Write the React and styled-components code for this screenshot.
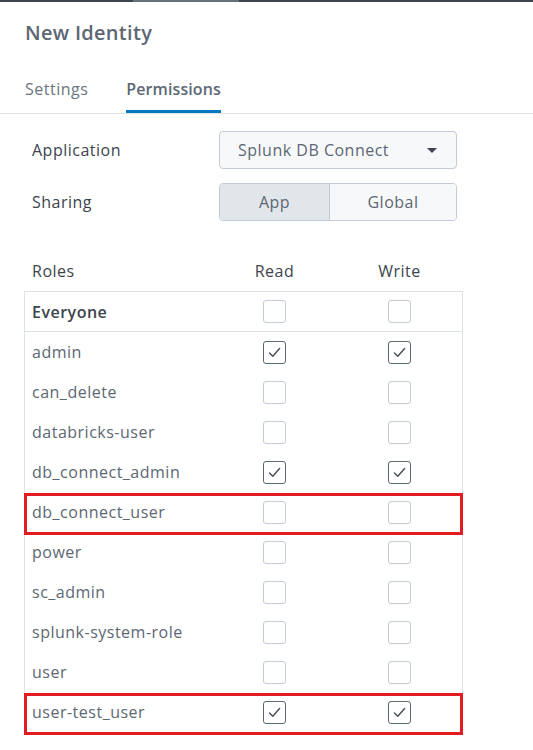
import React from "react";
import styled, { createGlobalStyle } from "styled-components";

const Global = createGlobalStyle`
  html, body { margin: 0; padding: 0; background: #fff; }
  body { font-family: "Open Sans", Lato, "Liberation Sans", sans-serif; color: #5c6773; letter-spacing: 0.5px; }
  * { box-sizing: border-box; }
`;

const Page = styled.div`
  width: 533px;
  min-height: 750px;
  background: #fff;
  display: flex;
  flex-direction: column;
`;

const TopBar = styled.div`
  height: 2px;
  display: grid;
  grid-template-columns: 133px 106px 1fr;
`;

const BarSeg = styled.div`
  background: ${(p) => (p.$light ? "#627479" : "#3c444d")};
`;

const Title = styled.h1`
  margin: 0;
  padding: 19px 25px 0;
  font-size: 20px;
  line-height: 24px;
  font-weight: 600;
  letter-spacing: 0.3px;
  color: #5c6773;
`;

const Tabs = styled.div`
  display: flex;
  gap: 38px;
  padding: 0 25px;
  border-bottom: 1px solid #dde2e7;
`;

const Tab = styled.div`
  padding: 34px 0 11px;
  font-size: 16px;
  line-height: 20px;
  letter-spacing: ${(p) => (p.$active ? "0.1px" : "0.5px")};
  font-weight: ${(p) => (p.$active ? 600 : 400)};
  color: ${(p) => (p.$active ? "#5c6773" : "#6b7580")};
  border-bottom: 3px solid ${(p) => (p.$active ? "#0877c2" : "transparent")};
`;

const Form = styled.div`
  padding: 17px 0 0 32px;
  display: flex;
  flex-direction: column;
  gap: 14px;
`;

const FormRow = styled.div`
  display: grid;
  grid-template-columns: 187px 238px;
  align-items: center;
`;

const Label = styled.div`
  font-size: 16px;
  line-height: 20px;
  color: #3c444d;
`;

const Select = styled.div`
  height: 38px;
  border: 1px solid #c3cbd4;
  border-radius: 4px;
  background: #f7f8fa;
  display: flex;
  align-items: center;
  justify-content: space-between;
  padding: 0 19px 0 18px;
  font-size: 16px;
  color: #5c6773;
`;

const Caret = styled.span`
  width: 0;
  height: 0;
  border-left: 5px solid transparent;
  border-right: 5px solid transparent;
  border-top: 5px solid #3c444d;
`;

const Segmented = styled.div`
  height: 38px;
  display: grid;
  grid-template-columns: 109px 1fr;
  border: 1px solid #c3cbd4;
  border-radius: 4px;
  overflow: hidden;
`;

const SegButton = styled.div`
  display: flex;
  align-items: center;
  justify-content: center;
  font-size: 16px;
  color: #5c6773;
  background: ${(p) => (p.$active ? "#e1e6eb" : "#f7f8fa")};
  border-left: ${(p) => (p.$first ? "none" : "1px solid #c3cbd4")};
`;

const TableWrap = styled.div`
  padding: 30px 0 0 24px;
  width: 463px;
`;

const Grid = `
  display: grid;
  grid-template-columns: 187px 125px 125px;
  align-items: center;
`;

const HeadRow = styled.div`
  ${Grid}
  height: 40px;
  padding-left: 1px;
  font-size: 16px;
  color: #3c444d;
`;

const HeadCell = styled.div`
  padding-left: ${(p) => (p.$center ? 0 : "7px")};
  text-align: ${(p) => (p.$center ? "center" : "left")};
`;

const Table = styled.div`
  border: 1px solid #dde2e7;
  border-bottom: none;
`;

const Row = styled.div`
  ${Grid}
  position: relative;
  height: 40px;
  border-bottom: ${(p) => (p.$divider ? "1px solid #dde2e7" : "none")};
  &::after {
    content: "";
    display: ${(p) => (p.$highlight ? "block" : "none")};
    position: absolute;
    top: 1px;
    bottom: -3px;
    left: -1px;
    right: -1px;
    border: 3px solid #e31b23;
  }
`;

const Name = styled.div`
  padding-left: 7px;
  font-size: 16px;
  line-height: 20px;
  font-weight: ${(p) => (p.$bold ? 600 : 400)};
  color: ${(p) => (p.$bold ? "#3c444d" : "#5c6773")};
`;

const Cell = styled.div`
  display: flex;
  justify-content: center;
`;

const Box = styled.div`
  width: 23px;
  height: 23px;
  border-radius: 3px;
  border: 1px solid ${(p) => (p.$checked ? "#5c6773" : "#c3cbd4")};
  background: #fff;
  display: flex;
  align-items: center;
  justify-content: center;
`;

const Check = ({ checked }) => (
  <Box $checked={checked}>
    {checked && (
      <svg width="15" height="15" viewBox="0 0 15 15" fill="none">
        <path d="M2.5 8 L5.8 11.2 L12.6 3.6" stroke="#4a525c" strokeWidth="1.5" strokeLinecap="round" strokeLinejoin="round" />
      </svg>
    )}
  </Box>
);

const roles = [
  { name: "Everyone", bold: true, r: false, w: false },
  { name: "admin", r: true, w: true },
  { name: "can_delete", r: false, w: false },
  { name: "databricks-user", r: false, w: false },
  { name: "db_connect_admin", r: true, w: true },
  { name: "db_connect_user", r: false, w: false, hl: true },
  { name: "power", r: false, w: false },
  { name: "sc_admin", r: false, w: false },
  { name: "splunk-system-role", r: false, w: false },
  { name: "user", r: false, w: false },
  { name: "user-test_user", r: true, w: true, hl: true },
];

export default function App() {
  return (
    <>
      <Global />
      <Page>
        <TopBar>
          <BarSeg />
          <BarSeg $light />
          <BarSeg />
        </TopBar>
        <Title>New Identity</Title>
        <Tabs>
          <Tab>Settings</Tab>
          <Tab $active>Permissions</Tab>
        </Tabs>
        <Form>
          <FormRow>
            <Label>Application</Label>
            <Select>
              <span>Splunk DB Connect</span>
              <Caret />
            </Select>
          </FormRow>
          <FormRow>
            <Label>Sharing</Label>
            <Segmented>
              <SegButton $first $active>App</SegButton>
              <SegButton>Global</SegButton>
            </Segmented>
          </FormRow>
        </Form>
        <TableWrap>
          <HeadRow>
            <HeadCell>Roles</HeadCell>
            <HeadCell $center>Read</HeadCell>
            <HeadCell $center>Write</HeadCell>
          </HeadRow>
          <Table>
            {roles.map((r, i) => (
              <Row key={r.name} $divider={i === 0} $highlight={r.hl}>
                <Name $bold={r.bold}>{r.name}</Name>
                <Cell><Check checked={r.r} /></Cell>
                <Cell><Check checked={r.w} /></Cell>
              </Row>
            ))}
          </Table>
        </TableWrap>
      </Page>
    </>
  );
}
